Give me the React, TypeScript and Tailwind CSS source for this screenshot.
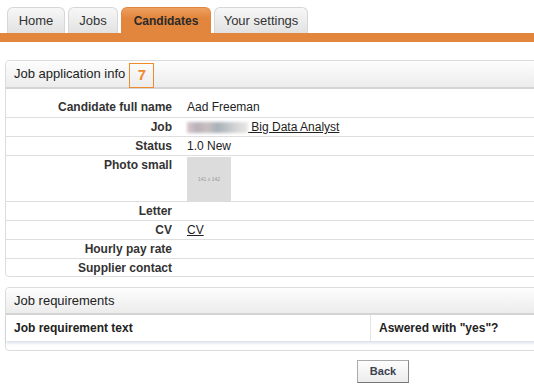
import React from "react";

const Tab = ({ label, active, w }: { label: string; active?: boolean; w: string }) => (
  <div
    className={
      "h-[26px] flex items-center justify-center rounded-t-[6px] border border-b-0 " +
      w +
      " " +
      (active
        ? "bg-[linear-gradient(#eea060,#e2863d_40%)] border-[#e2863d] text-[#2a2a2a] font-bold text-[12px]"
        : "bg-[linear-gradient(#f7f7f7,#e2e2e2)] border-[#d6d6d6] text-[#333] text-[13px]")
    }
  >
    {label}
  </div>
);

const Row = ({ label, children, first, h }: { label: string; children?: React.ReactNode; first?: boolean; h?: string }) => (
  <div className={"flex " + (first ? "" : "border-t border-[#dedede] ") + (h ?? "h-[19px]")}>
    <div className="w-[166px] text-right font-bold text-[12px] leading-[17px] text-[#333] pt-[1px]">{label}</div>
    <div className="pl-[15px] text-[12px] leading-[17px] text-[#222] pt-[1px]">{children}</div>
  </div>
);

export default function App() {
  return (
    <div className="w-[534px] h-[392px] overflow-hidden bg-white text-[#222]" style={{ fontFamily: '"Liberation Sans", Arial, sans-serif' }}>
      <div className="flex gap-[3px] pl-[7px] pt-[7px]">
        <Tab label="Home" w="w-[58px]" />
        <Tab label="Jobs" w="w-[50px]" />
        <Tab label="Candidates" active w="w-[90px]" />
        <Tab label="Your settings" w="w-[94px]" />
      </div>
      <div className="h-[9px] bg-[#e2863d]" />

      <div className="ml-[5px] mt-[18px] w-[580px] border border-[#dcdcdc] rounded-[4px]">
        <div className="h-[28px] flex items-center bg-[linear-gradient(#fdfdfd,#ececec)] border-b-2 border-[#d4d4d4] rounded-t-[4px]">
          <span className="ml-[8px] text-[13px] text-[#222]">Job application info</span>
          <span className="ml-[4px] mt-[2px] w-[25px] h-[25px] border border-[#f08a2c] flex items-center justify-center text-[#f08a2c] font-bold text-[15px]">7</span>
        </div>
        <div className="pt-[9px]">
          <Row label="Candidate full name" first>Aad Freeman</Row>
          <Row label="Job">
            <span className="inline-flex items-center">
              <span className="inline-block w-[61px] h-[11px] blur-[1.5px] bg-[linear-gradient(90deg,#d8c8cc,#b8b0b8,#c8c0c0,#a8b0b8,#c0c4c8,#d8d8d8,#e8e8e8)] align-middle" />
              <span className="underline">&nbsp;Big Data Analyst</span>
            </span>
          </Row>
          <Row label="Status">1.0 New</Row>
          <Row label="Photo small" h="h-[46px]">
            <div className="w-[44px] h-[45px] bg-[#dcdcdc] flex items-center justify-center text-[5px] text-[#999]">141 x 142</div>
          </Row>
          <Row label="Letter" />
          <Row label="CV"><span className="underline">CV</span></Row>
          <Row label="Hourly pay rate" />
          <Row label="Supplier contact" h="h-[18px]" />
        </div>
      </div>

      <div className="ml-[5px] mt-[10px] w-[580px] border border-[#dcdcdc] rounded-[4px]">
        <div className="h-[27px] flex items-center bg-[linear-gradient(#fdfdfd,#ececec)] border-b-2 border-[#d4d4d4] rounded-t-[4px]">
          <span className="ml-[8px] text-[13px] text-[#222]">Job requirements</span>
        </div>
        <div className="flex h-[26px] bg-white shadow-[0_2px_3px_rgba(170,185,205,0.45)]">
          <div className="w-[365px] border-r border-[#e4e4e4] flex items-center pl-[8px] font-bold text-[12px] text-[#222]">Job requirement text</div>
          <div className="flex items-center pl-[8px] font-bold text-[12px] text-[#222]">Aswered with "yes"?</div>
        </div>
        <div className="h-[9px]" />
      </div>

      <div className="mt-[9px] ml-[357px] w-[52px] h-[23px] border border-[#aaa] border-b-[#777] border-r-[#888] bg-[linear-gradient(#fdfdfd,#ececec)] flex items-center justify-center text-[11px] font-bold text-[#3a4250]">
        Back
      </div>
    </div>
  );
}
